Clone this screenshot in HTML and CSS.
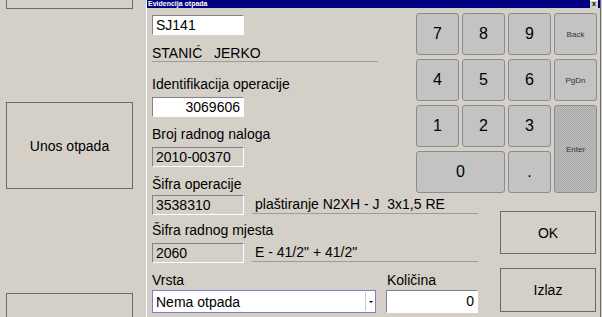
FILE: index.html
```html
<!DOCTYPE html>
<html lang="hr">
<head>
    <meta charset="UTF-8">
    <title>Evidencija otpada</title>
    <link rel="stylesheet" href="styles.css">
</head>
<body>
    <div class="screen">
        <div class="side">
            <button class="side-btn first"></button>
            <button class="side-btn middle">Unos otpada</button>
            <button class="side-btn last"></button>
        </div>

        <div class="dialog">
            <div class="title-bar">
                <span class="title">Evidencija otpada</span>
                <span class="close-btn">x</span>
            </div>

            <div class="top-part">
                <div class="fields">
                    <div class="input user">SJ141</div>
                    <div class="name-line">STANIĆ&nbsp;&nbsp;&nbsp;JERKO</div>
                    <div class="label ident-label">Identifikacija operacije</div>
                    <div class="input num">3069606</div>
                    <div class="label">Broj radnog naloga</div>
                    <div class="box">2010-00370</div>
                    <div class="label">Šifra operacije</div>
                </div>

                <div class="keypad">
                    <button class="key">7</button>
                    <button class="key">8</button>
                    <button class="key">9</button>
                    <button class="key small">Back</button>
                    <button class="key">4</button>
                    <button class="key">5</button>
                    <button class="key">6</button>
                    <button class="key small">PgDn</button>
                    <button class="key">1</button>
                    <button class="key">2</button>
                    <button class="key">3</button>
                    <button class="key small enter">Enter</button>
                    <button class="key zero">0</button>
                    <button class="key">.</button>
                </div>
            </div>

            <div class="bottom-part">
                <div class="fields wide">
                    <div class="row first-row">
                        <div class="box">3538310</div>
                        <div class="desc">plaštiranje N2XH - J&nbsp;&nbsp;3x1,5 RE</div>
                    </div>
                    <div class="label place-label">Šifra radnog mjesta</div>
                    <div class="row">
                        <div class="box">2060</div>
                        <div class="desc">E - 41/2" + 41/2"</div>
                    </div>
                    <div class="row labels">
                        <div class="label kind">Vrsta</div>
                        <div class="label">Količina</div>
                    </div>
                    <div class="row inputs">
                        <div class="select">
                            <span class="select-text">Nema otpada</span>
                            <span class="select-arrow"></span>
                        </div>
                        <div class="input qty">0</div>
                    </div>
                </div>

                <div class="actions">
                    <button class="action-btn ok">OK</button>
                    <button class="action-btn exit">Izlaz</button>
                </div>
            </div>
        </div>
    </div>
</body>
</html>
```

FILE: styles.css
```css
body {
    margin: 0;
    background-color: #d4d0c8;
    font-family: 'Liberation Sans', Arial, sans-serif;
    font-size: 14px;
    color: #000;
    overflow: hidden;
}
button {
    font-family: 'Liberation Sans', Arial, sans-serif;
    font-size: 14px;
    color: #000;
    padding: 0;
    cursor: pointer;
}
.screen {
    display: flex;
    height: 317px;
    overflow: hidden;
}

/* left menu */
.side {
    width: 146px;
    display: flex;
    flex-direction: column;
}
.side-btn {
    width: 127px;
    height: 87px;
    margin-left: 6px;
    background-color: #d4d0c8;
    border: 1px solid #6b6b6b;
    flex-shrink: 0;
}
.side-btn.first {
    margin-top: -78px;
}
.side-btn.middle {
    margin-top: 93px;
}
.side-btn.last {
    margin-top: 104px;
}

/* dialog */
.dialog {
    width: 453px;
    border-left: 1px solid #fff;
    border-right: 1px solid #6b6b6b;
    display: flex;
    flex-direction: column;
}
.title-bar {
    height: 8px;
    background-color: #000080;
    display: flex;
    align-items: center;
    justify-content: space-between;
}
.title {
    color: #fff;
    font-size: 7px;
    font-weight: bold;
    line-height: 8px;
    padding-left: 1px;
}
.close-btn {
    width: 8px;
    height: 7px;
    margin-right: 2px;
    background-color: #d4d0c8;
    border-top: 1px solid #fff;
    font-size: 7px;
    font-weight: bold;
    line-height: 6px;
    text-align: center;
}

.top-part {
    display: flex;
    height: 185px;
}
.fields {
    width: 226px;
    padding-left: 5px;
    display: flex;
    flex-direction: column;
}
.label {
    line-height: 16px;
    margin-top: 9px;
}
.input, .box {
    height: 18px;
    line-height: 18px;
    padding: 0 3px;
    border-top: 1px solid #848284;
    border-left: 1px solid #848284;
    border-bottom: 1px solid #fff;
    border-right: 1px solid #fff;
    width: 84px;
    flex-shrink: 0;
}
.input {
    background-color: #fff;
}
.box {
    background-color: #d4d0c8;
    margin-top: 5px;
}
.user {
    margin-top: 7px;
}
.num {
    text-align: right;
    margin-top: 5px;
}
.name-line {
    margin-top: 10px;
    line-height: 16px;
    border-bottom: 1px solid #a09c94;
}
.ident-label {
    margin-top: 14px;
}

/* keypad */
.keypad {
    margin-left: auto;
    margin-right: 3px;
    margin-top: 5px;
    display: grid;
    grid-template-columns: repeat(4, 43px);
    grid-template-rows: repeat(4, 42px);
    column-gap: 3px;
    row-gap: 4px;
}
.key {
    background-color: #c3c3c3;
    border: 1px solid #8c8c8c;
    border-radius: 3px;
    font-size: 16px;
}
.key.small {
    font-size: 8px;
    color: #333;
}
.key.enter {
    grid-column: 4;
    grid-row: 3 / span 2;
    background: repeating-conic-gradient(#a9a9a9 0 25%, #bdbdbd 0 50%) 0 0 / 2px 2px;
}
.key.zero {
    grid-column: 1 / span 2;
}

/* lower part */
.bottom-part {
    display: flex;
    padding-top: 2px;
}
.fields.wide {
    width: 326px;
}
.row {
    display: flex;
}
.row .box {
    margin-top: 0;
}
.place-label {
    margin-top: 7px;
}
.row:nth-child(3) {
    margin-top: 5px;
}
.desc {
    flex: 1;
    margin-left: 8px;
    height: 18px;
    line-height: 18px;
    padding-left: 3px;
    border-bottom: 1px solid #a09c94;
}
.labels .label {
    margin-top: 9px;
}
.kind {
    width: 235px;
}
.inputs {
    margin-top: 2px;
}
.select {
    width: 223px;
    height: 21px;
    background-color: #fff;
    border: 1px solid #7f7fc8;
    display: flex;
    align-items: center;
}
.select-text {
    flex: 1;
    padding-left: 3px;
}
.select-arrow {
    width: 9px;
    height: 19px;
    border-left: 1px solid #c8c8c8;
    position: relative;
}
.select-arrow::after {
    content: '';
    position: absolute;
    left: 3px;
    top: 9px;
    border-left: 2px solid transparent;
    border-right: 2px solid transparent;
    border-top: 2px solid #000;
}
.qty {
    margin-left: 10px;
    width: 84px;
    height: 21px;
    line-height: 21px;
    text-align: right;
}

.actions {
    margin-left: 22px;
    display: flex;
    flex-direction: column;
}
.action-btn {
    width: 96px;
    background-color: #d4d0c8;
    border: 1px solid #6b6b6b;
}
.ok {
    margin-top: 16px;
    height: 43px;
}
.exit {
    margin-top: 14px;
    height: 44px;
}
```
